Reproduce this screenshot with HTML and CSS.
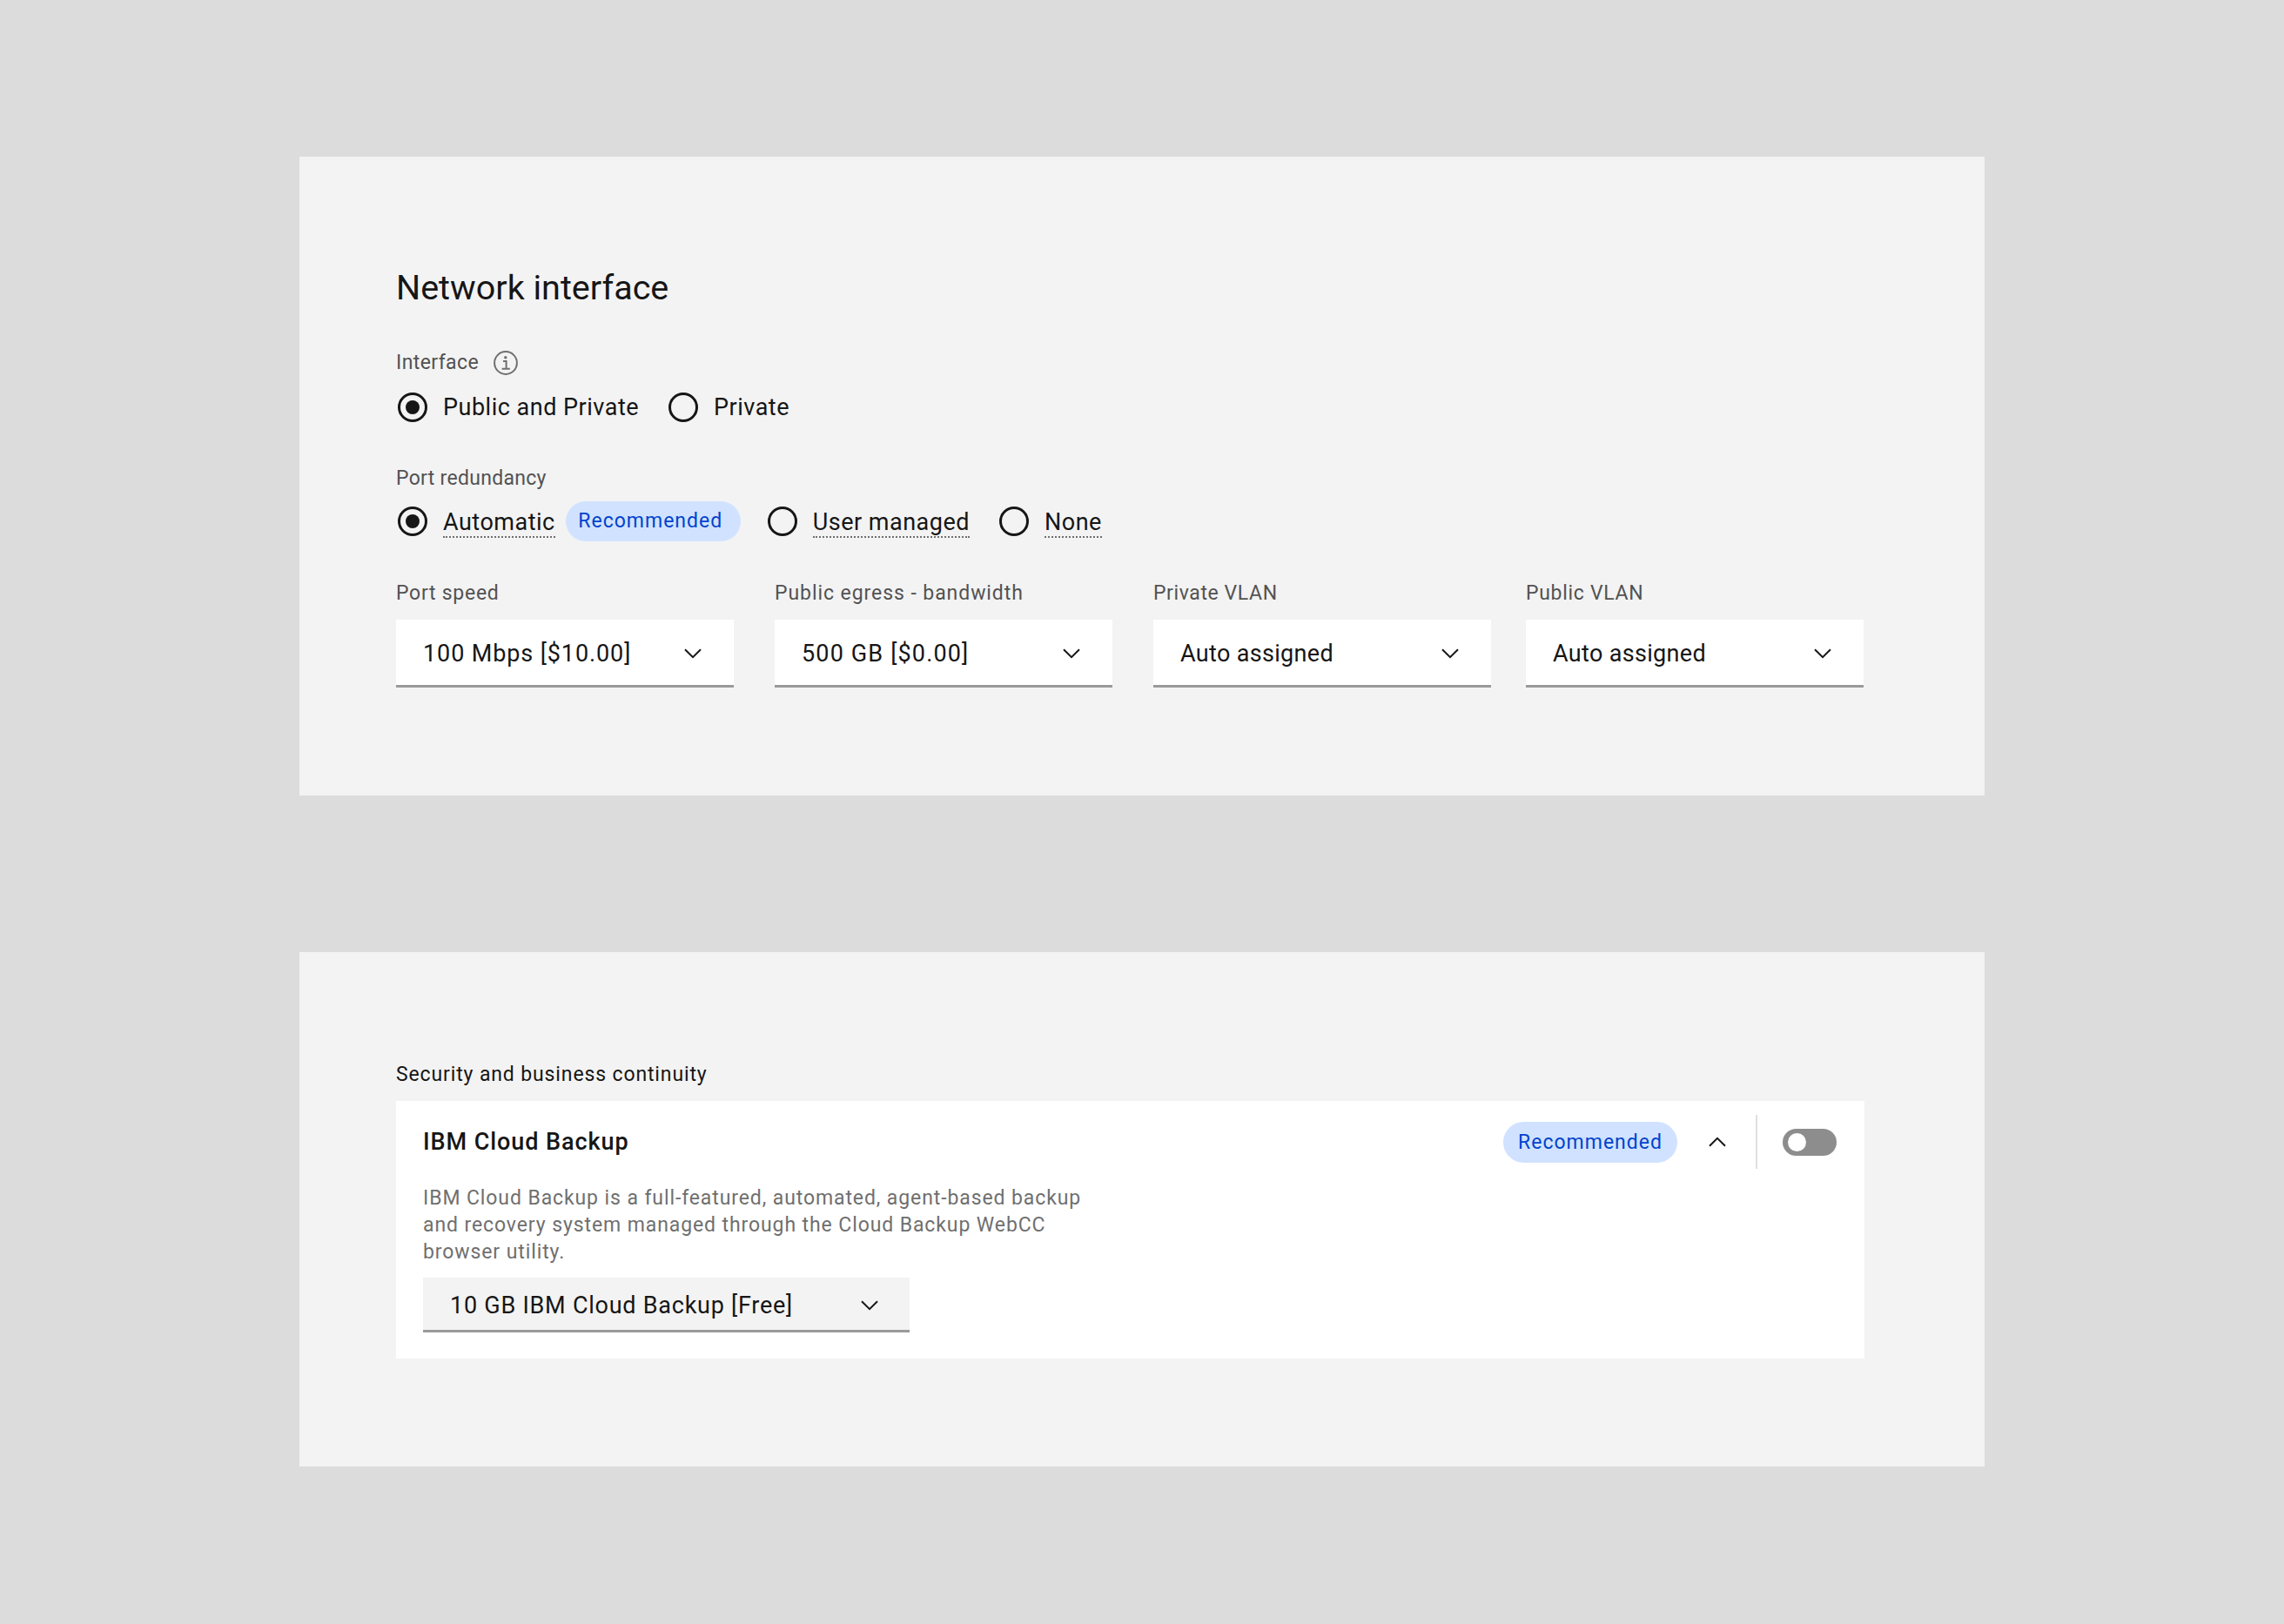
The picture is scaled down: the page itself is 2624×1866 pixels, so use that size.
FILE: index.html
```html
<!DOCTYPE html>
<html>
<head>
<meta charset="utf-8">
<title>Network interface</title>
<link rel="stylesheet" href="styles.css">
</head>
<body>
<div class="card card-net">
  <h2 class="title">Network interface</h2>
  <div class="label label-info">
    <span>Interface</span>
    <svg class="info" viewBox="0 0 28 28"><circle cx="14" cy="14" r="12.9" fill="none" stroke="#6f6f6f" stroke-width="2"/><path d="M11 12h3.6v8.6M9.6 20.8h9.2" fill="none" stroke="#6f6f6f" stroke-width="2"/><circle cx="13.8" cy="7.8" r="1.7" fill="#6f6f6f"/></svg>
  </div>
  <div class="radios">
    <span class="radio on"></span><span class="opt">Public and Private</span>
    <span class="radio r2"></span><span class="opt">Private</span>
  </div>
  <div class="label lab-port">Port redundancy</div>
  <div class="radios">
    <span class="radio on"></span><span class="opt dot">Automatic</span>
    <span class="badge b1">Recommended</span>
    <span class="radio r3"></span><span class="opt dot">User managed</span>
    <span class="radio r2"></span><span class="opt dot">None</span>
  </div>
  <div class="fields">
    <div class="field f1">
      <div class="label">Port speed</div>
      <div class="select"><span>100 Mbps [$10.00]</span><svg class="chev" viewBox="0 0 20 12"><path d="M1 1.2l9 9 9-9" fill="none" stroke="#161616" stroke-width="2"/></svg></div>
    </div>
    <div class="field f2">
      <div class="label">Public egress - bandwidth</div>
      <div class="select"><span>500 GB [$0.00]</span><svg class="chev" viewBox="0 0 20 12"><path d="M1 1.2l9 9 9-9" fill="none" stroke="#161616" stroke-width="2"/></svg></div>
    </div>
    <div class="field f3">
      <div class="label">Private VLAN</div>
      <div class="select"><span>Auto assigned</span><svg class="chev" viewBox="0 0 20 12"><path d="M1 1.2l9 9 9-9" fill="none" stroke="#161616" stroke-width="2"/></svg></div>
    </div>
    <div class="field f4">
      <div class="label">Public VLAN</div>
      <div class="select"><span>Auto assigned</span><svg class="chev" viewBox="0 0 20 12"><path d="M1 1.2l9 9 9-9" fill="none" stroke="#161616" stroke-width="2"/></svg></div>
    </div>
  </div>
</div>
<div class="card card-sec">
  <div class="label sec-label">Security and business continuity</div>
  <div class="panel">
    <div class="panel-head">
      <b class="panel-title">IBM Cloud Backup</b>
      <span class="badge b2">Recommended</span>
      <svg class="chev-up" viewBox="0 0 20 12"><path d="M1 10.8l9-9 9 9" fill="none" stroke="#161616" stroke-width="2"/></svg>
      <span class="divider"></span>
      <span class="toggle"><span class="knob"></span></span>
    </div>
    <p class="desc">IBM Cloud Backup is a full-featured, automated, agent-based backup<br>and recovery system managed through the Cloud Backup WebCC<br>browser utility.</p>
    <div class="select select-sm"><span>10 GB IBM Cloud Backup [Free]</span><svg class="chev" viewBox="0 0 20 12"><path d="M1 1.2l9 9 9-9" fill="none" stroke="#161616" stroke-width="2"/></svg></div>
  </div>
</div>
</body>
</html>
```

FILE: styles.css
```css
html, body {margin: 0; padding: 0}
body {background: #dcdcdc; font-family: Roboto, "Liberation Sans", sans-serif; color: #161616; padding-top: 180px; height: 1686px}

.card {background: #f3f3f3; width: 1936px; margin-left: 344px; box-sizing: border-box; padding-left: 111px; padding-right: 138px}
.card-net {height: 734px; padding-top: 127px}
.card-sec {height: 591px; margin-top: 180px; padding-top: 125px}

.title {margin: 0 0 47px 0; font-size: 39.5px; line-height: 48px; font-weight: 400}

.label {font-size: 23px; line-height: 32px; height: 30px; color: #525252; letter-spacing: 0.4px}
.label-info {display: flex; align-items: center; gap: 17px; margin-bottom: 13px}
.lab-port {margin-top: 43px; margin-bottom: 12px; letter-spacing: 0.3px}
.info {width: 28px; height: 28px; display: block}

.radios {display: flex; align-items: center; height: 46px; font-size: 27px; margin-left: 2px}
.radio {width: 34px; height: 34px; border: 3px solid #161616; border-radius: 50%; box-sizing: border-box; margin-right: 18px; flex: none; position: relative}
.radio.on::after {content: ""; position: absolute; left: 6px; top: 6px; width: 16px; height: 16px; border-radius: 50%; background: #161616}
.r2 {margin-left: 34px}
.r3 {margin-left: 31px}
.opt {line-height: 36px; letter-spacing: 0.5px}
.dot {border-bottom: 2px dotted #6f6f6f; line-height: 32px; margin-top: 4px}

.badge {display: block; background: #d0e2ff; color: #0043ce; border-radius: 24px; font-size: 23px; line-height: 46px; height: 46px; text-align: center; box-sizing: border-box; letter-spacing: 1px; padding-right: 6px; flex: none}
.b1 {width: 201px; margin-left: 12px}
.b2 {width: 200px; height: 47px; line-height: 47px; padding-right: 0}

.fields {display: flex; margin-top: 44px}
.field {width: 388px; flex: none}
.field .label {margin-bottom: 16px}
.f1 {margin-right: 47px}
.f2 {margin-right: 47px}
.f3 {margin-right: 40px}
.f1 .label {letter-spacing: 0.73px}
.f2 .label {letter-spacing: 0.93px}
.f3 .label {letter-spacing: 0.6px}
.f4 .label {letter-spacing: 0.7px}

.select {display: flex; align-items: center; justify-content: space-between; background: #fff; height: 78px; box-sizing: border-box; border-bottom: 3px solid #9a9a9a; padding: 3px 37px 0 31px; font-size: 27px; letter-spacing: 0.33px}
.f1 .select {letter-spacing: 0.89px}
.f2 .select {letter-spacing: 1.15px}
.chev {width: 20px; height: 12px; display: block; flex: none}
.select-sm {background: #f3f3f3; width: 559px; height: 63px; letter-spacing: 0.75px; padding-right: 36px}

.sec-label {color: #161616; margin-bottom: 16px; letter-spacing: 0.87px}
.panel {background: #fff; height: 296px; box-sizing: border-box; padding: 16px 32px 0 31px}
.panel-head {display: flex; align-items: center; height: 62px}
.panel-title {font-size: 27px; font-weight: 500; margin-right: auto; letter-spacing: 0.93px}
.chev-up {width: 20px; height: 12px; display: block; flex: none; margin-left: 36px}
.divider {width: 2px; height: 62px; background: #e0e0e0; margin-left: 34px}
.toggle {display: block; width: 62px; height: 31px; border-radius: 16px; background: #8d8d8d; margin-left: 29px; position: relative}
.knob {position: absolute; left: 6px; top: 5px; width: 21px; height: 21px; border-radius: 50%; background: #fff}

.desc {margin: 18px 0 14px 0; font-size: 23px; line-height: 31px; color: #6f6f6f; letter-spacing: 0.9px}
```
